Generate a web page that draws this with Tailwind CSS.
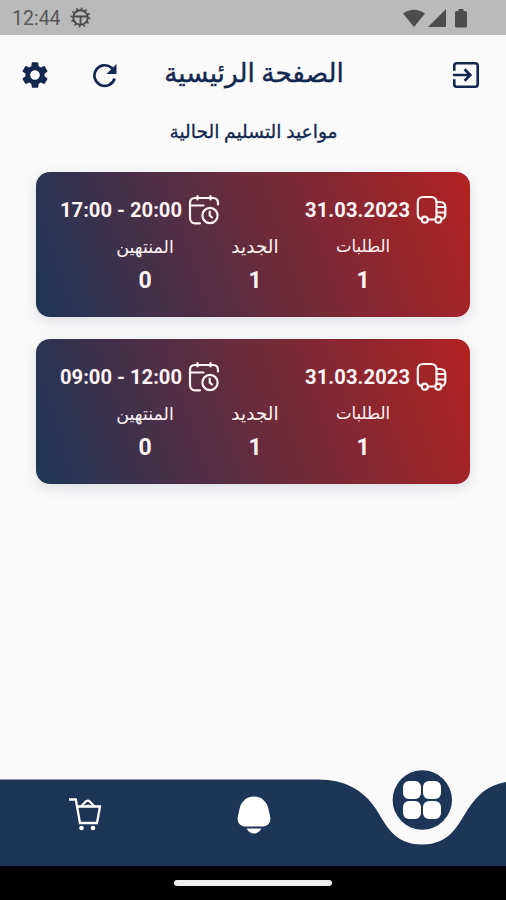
<!DOCTYPE html>
<html lang="ar">

<head>
	<meta charset="UTF-8">
	<meta name="viewport" content="width=device-width, initial-scale=1.0">
	<title>الصفحة الرئيسية</title>
	<script src="https://cdn.jsdelivr.net/npm/@tailwindcss/browser@4"></script>
</head>

<body class="w-[506px] h-[900px] overflow-hidden flex flex-col bg-[#fafafa] font-['Roboto','DejaVu_Sans',sans-serif] text-[#1d3557]">
	<!-- Shared icons -->
	<svg class="hidden">
		<symbol id="truck" viewBox="0 0 32 30">
			<g fill="none" stroke="currentColor" stroke-width="2.200">
				<path d="M5.500 24 C3 23.500 1.800 22 1.800 19.500 V7 C1.800 4 4 2 7 2 H15 C18.500 2 20.500 4 20.500 7.500 V23 M12 24.500 H18.500" />
				<path d="M20.500 7 H24 C27.500 7 29.300 9 29.300 12 V19 C29.300 22 28.300 23.500 26 24" />
				<path d="M21 12 H29 M21 17.500 H29" stroke-width="1.800" />
				<circle cx="8.800" cy="24.700" r="3" />
				<circle cx="22.300" cy="24.700" r="3" />
			</g>
		</symbol>
		<symbol id="calendar" viewBox="0 0 32 31">
			<g fill="none" stroke="currentColor" stroke-width="2.200" stroke-linecap="round">
				<path d="M9.500 2 V5.500 M22.500 2 V5.500 M30 10.500 V9 C30 5.500 28 4 25 4 H7 C4 4 2 5.700 2 9 V23.500 C2 27 4 29.300 7 29.300 H12 M2.500 11.500 H15.500" />
				<circle cx="22" cy="21.500" r="7.600" />
				<path d="M21.700 17.500 V21.500 L24 23.500" />
			</g>
		</symbol>
	</svg>

	<!-- Status bar -->
	<div class="h-[35px] shrink-0 flex items-center bg-[#bababa] text-[#575757] pl-3 pr-[39px]">
		<span class="text-[19.500px] leading-none pt-[3px] w-[58px]">12:44</span>
		<svg class="size-[21px]" viewBox="0 0 21 21" fill="none" stroke="#484848">
			<circle cx="10.500" cy="10.500" r="7.300" stroke-width="2" />
			<circle cx="10.500" cy="10.500" r="9" stroke-width="2" stroke-dasharray="1.600 3.112" />
			<path d="M3.500 9.500 H17.500 M10.500 10 V18" stroke-width="1.800" />
		</svg>
		<div class="ml-auto flex items-center text-[#4d4d4d] pt-px">
			<svg class="w-[22px] h-[19px]" viewBox="0 0 22 19" fill="currentColor">
				<path d="M0 4.500 Q11 -3 22 4.500 L11 18 Z" />
			</svg>
			<svg class="w-[18px] h-[19px] ml-[3px]" viewBox="0 0 18 19" fill="currentColor">
				<path d="M18 0 V18 H0 Z" />
			</svg>
			<svg class="w-[12px] h-[19px] ml-[9px]" viewBox="0 0 12 19" fill="currentColor">
				<path d="M3.500 0 H8.500 V2 H10.500 Q12 2 12 3.500 V17 Q12 18.500 10.500 18.500 H1.500 Q0 18.500 0 17 V3.500 Q0 2 1.500 2 H3.500 Z" />
			</svg>
		</div>
	</div>

	<!-- Header -->
	<header class="h-[80px] shrink-0 flex items-center pl-[19px] pr-[26px] text-[#14274e]">
		<svg class="size-8" viewBox="0 0 24 24" fill="currentColor">
			<path d="M19.140 12.940c.04-.3.060-.610.060-.940 0-.320-.020-.640-.070-.940l2.030-1.580c.18-.14.230-.410.120-.610l-1.920-3.320c-.12-.220-.370-.290-.590-.220l-2.390.960c-.5-.380-1.030-.7-1.620-.940L14.400 2.810c-.04-.240-.240-.410-.480-.410h-3.840c-.240 0-.430.170-.470.410L9.250 5.350C8.660 5.590 8.120 5.920 7.630 6.290L5.240 5.330c-.220-.080-.470 0-.590.220L2.740 8.870c-.12.210-.08.470.12.610l2.030 1.580C4.840 11.360 4.800 11.690 4.800 12s.02.640.07.940l-2.030 1.580c-.18.140-.23.410-.12.610l1.920 3.320c.12.220.37.290.59.220l2.390-.96c.5.380 1.030.7 1.620.940l.36 2.540c.05.240.24.410.48.410h3.840c.24 0 .44-.17.470-.41l.36-2.540c.59-.24 1.130-.56 1.620-.94l2.390.96c.22.080.47 0 .59-.22l1.920-3.320c.12-.22.070-.47-.12-.61L19.140 12.940zM12 15.600c-1.980 0-3.600-1.620-3.600-3.600s1.620-3.600 3.600-3.600 3.600 1.620 3.600 3.600S13.980 15.600 12 15.600z" />
		</svg>
		<svg class="size-[25px] ml-[41px]" viewBox="0 0 25 25" fill="none" stroke="currentColor" stroke-width="2.700">
			<path d="M22.600 15.500 A10.300 10.300 0 1 1 19.500 4.800 L22 7.200" />
			<path d="M24.500 1 V11 H14.500 Z" fill="currentColor" stroke="none" />
		</svg>
		<h1 dir="rtl" class="w-[178px] ml-12 -mt-1 flex justify-center text-[26.300px] leading-8 whitespace-nowrap [-webkit-text-stroke:0.4px]">الصفحة الرئيسية</h1>
		<svg class="size-[28px] ml-auto" viewBox="0 0 29 29" fill="none" stroke="currentColor" stroke-width="2.700">
			<path d="M2.350 10 V5 Q2.350 2.350 5 2.350 H24 Q26.650 2.350 26.650 5 V24 Q26.650 26.650 24 26.650 H5 Q2.350 26.650 2.350 24 V19" />
			<path d="M1 14.500 H19 M13 8.500 L19 14.500 L13 20.500" />
		</svg>
	</header>

	<h2 dir="rtl" class="h-[57px] shrink-0 pt-[5px] pl-px text-center text-[18.700px] leading-6 whitespace-nowrap text-[#14274e] [-webkit-text-stroke:0.3px]">مواعيد التسليم الحالية</h2>

	<!-- Delivery slots -->
	<main class="grow flex flex-col gap-[22px] px-9">
		<section class="w-[434px] h-[145px] rounded-[14px] bg-[linear-gradient(71.6deg,#1d3557,#b22222)] shadow-[0_4px_14px_rgba(29,53,87,0.14)] text-[#fff3f3] pt-[22px] px-6">
			<div class="flex items-center h-[31px] text-[20.200px] font-bold">
				<span class="w-[123px] pt-[2px] whitespace-nowrap">17:00 - 20:00</span>
				<svg class="w-8 h-[31px] ml-[5px]"><use href="#calendar" /></svg>
				<span class="w-[106px] pt-[2px] ml-auto whitespace-nowrap tracking-[0.08px]">31.03.2023</span>
				<svg class="w-8 h-[30px] ml-[5px] -mr-[2px]"><use href="#truck" /></svg>
			</div>
			<div class="grid grid-cols-[110px_110px_106px] pl-[30px] pt-px text-center">
				<span class="text-[17.500px] leading-[42px]">المنتهين</span>
				<span class="text-[18.500px] leading-[42px]">الجديد</span>
				<span class="text-[16.500px] leading-[42px]">الطلبات</span>
				<span class="text-[23px] leading-[26px] font-bold">0</span>
				<span class="text-[23px] leading-[26px] font-bold">1</span>
				<span class="text-[23px] leading-[26px] font-bold">1</span>
			</div>
		</section>

		<section class="w-[434px] h-[145px] rounded-[14px] bg-[linear-gradient(71.6deg,#1d3557,#b22222)] shadow-[0_4px_14px_rgba(29,53,87,0.14)] text-[#fff3f3] pt-[22px] px-6">
			<div class="flex items-center h-[31px] text-[20.200px] font-bold">
				<span class="w-[123px] pt-[2px] whitespace-nowrap">09:00 - 12:00</span>
				<svg class="w-8 h-[31px] ml-[5px]"><use href="#calendar" /></svg>
				<span class="w-[106px] pt-[2px] ml-auto whitespace-nowrap tracking-[0.08px]">31.03.2023</span>
				<svg class="w-8 h-[30px] ml-[5px] -mr-[2px]"><use href="#truck" /></svg>
			</div>
			<div class="grid grid-cols-[110px_110px_106px] pl-[30px] pt-px text-center">
				<span class="text-[17.500px] leading-[42px]">المنتهين</span>
				<span class="text-[18.500px] leading-[42px]">الجديد</span>
				<span class="text-[16.500px] leading-[42px]">الطلبات</span>
				<span class="text-[23px] leading-[26px] font-bold">0</span>
				<span class="text-[23px] leading-[26px] font-bold">1</span>
				<span class="text-[23px] leading-[26px] font-bold">1</span>
			</div>
		</section>
	</main>

	<!-- Bottom navigation -->
	<nav class="relative h-[97px] shrink-0 flex text-white">
		<svg class="absolute inset-0 w-full h-full" viewBox="0 0 506 97" fill="#1d3557">
			<path d="M0 10.500 H318 C346 10.500 364 22 376 40 C386 56 394 75.500 422 75.500 C450 75.500 458 56 468 40 C478 25 488 16 506 13 V97 H0 Z" />
			<circle cx="422.300" cy="31" r="29.700" />
		</svg>
		<div class="relative w-[169px] flex justify-center pt-[28px] pl-px">
			<svg class="w-[34px] h-[34px]" viewBox="0 0 34 34" fill="none" stroke="currentColor" stroke-width="2.300">
				<path d="M1 2.500 H7.800 L12 26 H29 L32 9.500 H9" />
				<path d="M13.500 9 L17.500 4.800 Q19.700 2.500 22 4.800 L26 9" />
				<path d="M18.500 8.500 H21.500" stroke-width="1.500" />
				<circle cx="13.500" cy="31" r="2.300" fill="currentColor" stroke="none" />
				<circle cx="25" cy="31" r="2.300" fill="currentColor" stroke="none" />
			</svg>
		</div>
		<div class="relative w-[169px] flex justify-center pt-[27px]">
			<svg class="w-[34px] h-[38px]" viewBox="0 0 34 38" fill="currentColor">
				<path d="M17 0.500 C25 0.500 30 6 31.500 13 L33 20 C34.500 26 31 30.500 25 30.500 H9 C3 30.500 -0.500 26 1 20 L2.500 13 C4 6 9 0.500 17 0.500 Z" />
				<path d="M9.500 32.500 H24.500 Q21.500 37.500 17 37.500 Q12.500 37.500 9.500 32.500 Z" />
			</svg>
		</div>
		<div class="relative w-[168px] flex justify-center pt-[12px]">
			<div class="grid grid-cols-2 gap-[2px] w-[38px] h-[38px] -ml-px">
				<span class="bg-white rounded-[6px]"></span>
				<span class="bg-white rounded-[6px]"></span>
				<span class="bg-white rounded-[6px]"></span>
				<span class="bg-white rounded-[6px]"></span>
			</div>
		</div>
	</nav>

	<!-- Gesture bar -->
	<div class="h-[34px] shrink-0 flex justify-center items-center bg-black">
		<div class="w-[158px] h-[6px] rounded-full bg-[#ededed]"></div>
	</div>
</body>

</html>
